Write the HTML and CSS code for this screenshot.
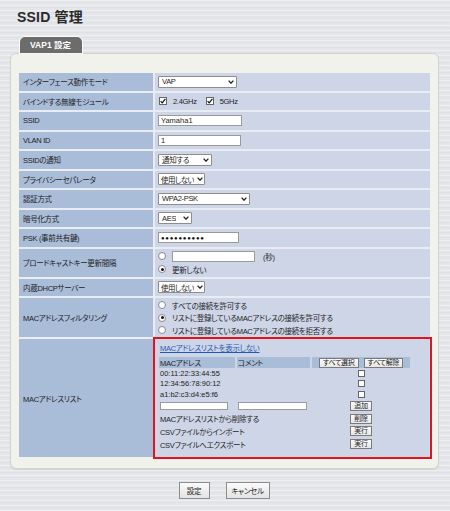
FILE: index.html
```html
<!DOCTYPE html>
<html lang="ja">
<head>
<meta charset="utf-8">
<title>SSID 管理</title>
<link rel="stylesheet" href="styles.css">
</head>
<body>
<div class="page">
  <h1 class="title">SSID 管理</h1>
  <div class="tab">VAP1 設定</div>
  <div class="panel">
    <div class="form">
      <div class="lbl">インターフェース動作モード</div>
      <div class="val"><span class="sel w79"><span class="st">VAP</span><svg class="chev" viewBox="0 0 6 4"><path d="M0.6 0.6 L3 3.2 L5.4 0.6"/></svg></span></div>

      <div class="lbl">バインドする無線モジュール</div>
      <div class="val"><span class="cb on"><svg viewBox="0 0 8 8"><path d="M1.6 4.2 L3.2 5.8 L6.4 1.8"/></svg></span><span class="opt">2.4GHz</span><span class="cb on cb2"><svg viewBox="0 0 8 8"><path d="M1.6 4.2 L3.2 5.8 L6.4 1.8"/></svg></span><span class="opt">5GHz</span></div>

      <div class="lbl">SSID</div>
      <div class="val"><span class="txt w84">Yamaha1</span></div>

      <div class="lbl">VLAN ID</div>
      <div class="val"><span class="txt w83">1</span></div>

      <div class="lbl">SSIDの通知</div>
      <div class="val"><span class="sel w54"><span class="st">通知する</span><svg class="chev" viewBox="0 0 6 4"><path d="M0.6 0.6 L3 3.2 L5.4 0.6"/></svg></span></div>

      <div class="lbl">プライバシーセパレータ</div>
      <div class="val"><span class="sel w47 tight"><span class="st">使用しない</span><svg class="chev" viewBox="0 0 6 4"><path d="M0.6 0.6 L3 3.2 L5.4 0.6"/></svg></span></div>

      <div class="lbl">認証方式</div>
      <div class="val"><span class="sel w92"><span class="st">WPA2-PSK</span><svg class="chev" viewBox="0 0 6 4"><path d="M0.6 0.6 L3 3.2 L5.4 0.6"/></svg></span></div>

      <div class="lbl">暗号化方式</div>
      <div class="val"><span class="sel w34"><span class="st">AES</span><svg class="chev" viewBox="0 0 6 4"><path d="M0.6 0.6 L3 3.2 L5.4 0.6"/></svg></span></div>

      <div class="lbl">PSK (事前共有鍵)</div>
      <div class="val"><span class="txt w81 pw">●●●●●●●●●●</span></div>

      <div class="lbl">ブロードキャストキー更新間隔</div>
      <div class="val col">
        <div class="line"><span class="rd"></span><span class="txt w83 ml6"></span><span class="sec">(秒)</span></div>
        <div class="line"><span class="rd on"></span><span class="opt">更新しない</span></div>
      </div>

      <div class="lbl">内蔵DHCPサーバー</div>
      <div class="val"><span class="sel w47 tight"><span class="st">使用しない</span><svg class="chev" viewBox="0 0 6 4"><path d="M0.6 0.6 L3 3.2 L5.4 0.6"/></svg></span></div>

      <div class="lbl">MACアドレスフィルタリング</div>
      <div class="val col">
        <div class="line2"><span class="rd"></span><span class="opt">すべての接続を許可する</span></div>
        <div class="line2"><span class="rd on"></span><span class="opt">リストに登録しているMACアドレスの接続を許可する</span></div>
        <div class="line2"><span class="rd"></span><span class="opt">リストに登録しているMACアドレスの接続を拒否する</span></div>
      </div>

      <div class="lbl">MACアドレスリスト</div>
      <div class="val mlcell">
        <a class="link" href="#">MACアドレスリストを表示しない</a>
        <div class="maclist">
          <div class="mh">MACアドレス</div>
          <div class="mh">コメント</div>
          <div class="mh center"><span class="sbtn">すべて選択</span><span class="sbtn">すべて解除</span></div>

          <div class="md">00:11:22:33:44:55</div><div class="md"></div><div class="md center"><span class="cb small"></span></div>
          <div class="md">12:34:56:78:90:12</div><div class="md"></div><div class="md center"><span class="cb small"></span></div>
          <div class="md">a1:b2:c3:d4:e5:f6</div><div class="md"></div><div class="md center"><span class="cb small"></span></div>

          <div class="ma"><span class="txt mini w68"></span></div><div class="ma"><span class="txt mini w69"></span></div><div class="ma center"><span class="sbtn">追加</span></div>
          <div class="ma span2">MACアドレスリストから削除する</div><div class="ma center"><span class="sbtn">削除</span></div>
          <div class="ma span2">CSVファイルからインポート</div><div class="ma center"><span class="sbtn">実行</span></div>
          <div class="ma span2">CSVファイルへエクスポート</div><div class="ma center"><span class="sbtn">実行</span></div>
        </div>
      </div>
    </div>
  </div>
  <div class="actions">
    <span class="btn w31">設定</span>
    <span class="btn w44">キャンセル</span>
  </div>
</div>
</body>
</html>
```

FILE: styles.css
```css
html, body {
  margin: 0;
  padding: 0;
}
body {
  background-color: #e4e6e9;
  background-image: repeating-linear-gradient(180deg, rgba(255,255,255,0.35) 0 1px, rgba(0,0,0,0) 1px 2px, rgba(0,0,0,0.025) 2px 3px, rgba(0,0,0,0) 3px 5px);
  font-family: "Liberation Sans", "Noto Sans CJK JP", sans-serif;
  font-size: 7.5px;
  font-feature-settings: "palt";
  letter-spacing: -0.3px;
  color: #1e1e1e;
  width: 450px;
  height: 511px;
  overflow: hidden;
}
.page {
  padding: 8px 11px 0 10px;
}
.title {
  margin: 0 0 0 7px;
  font-size: 14px;
  line-height: 18px;
  font-weight: bold;
  color: #2a2a2a;
  letter-spacing: 0.2px;
}
.tab {
  margin: 11px 0 0 9.5px;
  width: 62px;
  height: 16px;
  box-sizing: border-box;
  background: #6c6c6c;
  border-radius: 5px 5px 0 0;
  box-shadow: 0 0 0 1px rgba(255,255,255,0.8);
  color: #fff;
  font-weight: bold;
  font-size: 8.5px;
  letter-spacing: 0;
  line-height: 16px;
  text-align: center;
  position: relative;
  z-index: 1;
}
.panel {
  width: 429px;
  box-sizing: border-box;
  background: #f2f2ed;
  border: 1px solid #d3d3ce;
  border-radius: 6px;
  box-shadow: 0 1px 1px rgba(0,0,0,0.08);
  padding: 19px 8px 11px 8px;
}
.form {
  display: grid;
  grid-template-columns: 134px 275px;
  grid-template-rows: repeat(9, 17.5px) 28.2px 17.5px 39px 118.2px;
  gap: 2px;
  background: #e9edf3;
}
.lbl {
  background: #a9bcd8;
  display: flex;
  align-items: center;
  padding-left: 4px;
  white-space: nowrap;
}
.val {
  background: #cdd5e7;
  display: flex;
  align-items: center;
  padding-left: 3px;
  white-space: nowrap;
}
.val.col {
  flex-direction: column;
  align-items: flex-start;
  justify-content: center;
}

.sel {
  display: inline-flex;
  align-items: center;
  justify-content: space-between;
  height: 12px;
  box-sizing: border-box;
  border: 1px solid #8d8d8d;
  border-radius: 1px;
  background: #fff;
  padding: 0 2px 0 3px;
  overflow: hidden;
}
.sel.tight {
  padding: 0 1px 0 2px;
}
.sel.tight .st {
  letter-spacing: -0.55px;
  margin-right: 0;
}
.st {
  flex: 0 1 auto;
  overflow: hidden;
  margin-right: 1px;
}
.chev {
  width: 6px;
  height: 4px;
  flex: none;
}
.chev path {
  fill: none;
  stroke: #222;
  stroke-width: 1.3;
}
.txt {
  display: inline-flex;
  align-items: center;
  height: 11px;
  box-sizing: border-box;
  border: 1px solid #9a9a9a;
  background: #fff;
  padding: 0 2px;
  letter-spacing: 0;
}
.pw {
  font-size: 6px;
  letter-spacing: 0.75px;
  color: #111;
}
.w34 { width: 34px; }
.w47 { width: 47px; }
.w54 { width: 54px; }
.w79 { width: 79px; }
.w92 { width: 92px; }
.w81 { width: 81px; }
.w83 { width: 83px; }
.w84 { width: 84px; }
.w68 { width: 68px; }
.w69 { width: 69px; }
.w31 { width: 31px; }
.w44 { width: 44px; }

.cb {
  display: inline-block;
  width: 8px;
  height: 8px;
  box-sizing: border-box;
  border: 1px solid #666;
  background: #fff;
  margin-left: 1px;
  position: relative;
}
.cb svg {
  position: absolute;
  left: -1px;
  top: -1px;
  width: 8px;
  height: 8px;
}
.cb svg path {
  fill: none;
  stroke: #111;
  stroke-width: 1.2;
}
.cb2 { margin-left: 9px; }
.cb.small {
  width: 7px;
  height: 7px;
  margin-left: 0;
}
.opt { margin-left: 6px; }
.rd {
  display: inline-block;
  width: 8px;
  height: 8px;
  box-sizing: border-box;
  border: 1px solid #8a8a8a;
  border-radius: 50%;
  background: #fff;
  position: relative;
  flex: none;
}
.rd.on::after {
  content: "";
  position: absolute;
  left: 1.5px;
  top: 1.5px;
  width: 3px;
  height: 3px;
  border-radius: 50%;
  background: #111;
}
.line {
  display: flex;
  align-items: center;
  height: 13px;
}
.line2 {
  display: flex;
  align-items: center;
  height: 12.4px;
}
.ml6 { margin-left: 6px; }
.sec { margin-left: 8px; }

.mlcell {
  flex-direction: column;
  align-items: flex-start;
  justify-content: flex-start;
  padding: 4px 0 0 4px;
  outline: 2.5px solid #e0141b;
  position: relative;
  z-index: 2;
}
.link {
  color: #1f5bb5;
  text-decoration: underline;
  line-height: 12px;
  margin-left: 1px;
}
.maclist {
  margin-top: 2px;
  display: grid;
  grid-template-columns: 76px 73px 98px;
  grid-template-rows: 11px 10.5px 10.5px 10.5px 12.7px 12.7px 12.7px 12.7px;
  column-gap: 2px;
}
.mh {
  background: #a9bcd8;
  display: flex;
  align-items: center;
  padding-left: 1px;
}
.md, .ma {
  display: flex;
  align-items: center;
  padding-left: 1px;
}
.md { letter-spacing: 0; }
.center {
  justify-content: center;
  padding-left: 0;
  gap: 5px;
}
.span2 { grid-column: span 2; }
.sbtn {
  display: inline-flex;
  align-items: center;
  justify-content: center;
  height: 10px;
  box-sizing: border-box;
  padding: 0 3px;
  border: 1px solid #7b7b7b;
  background: linear-gradient(#fbfbfb, #e6e6e6);
  font-size: 7px;
  line-height: 8px;
  color: #1a1a1a;
}
.txt.mini {
  height: 8px;
}
.actions {
  display: flex;
  justify-content: center;
  gap: 16px;
  margin-top: 13px;
  padding-right: 1px;
}
.btn {
  display: inline-flex;
  align-items: center;
  justify-content: center;
  height: 17px;
  box-sizing: border-box;
  border: 1px solid #8c8c8c;
  background: linear-gradient(#fbfbfb, #e3e3e3);
  font-size: 7.5px;
  color: #1a1a1a;
}
```
